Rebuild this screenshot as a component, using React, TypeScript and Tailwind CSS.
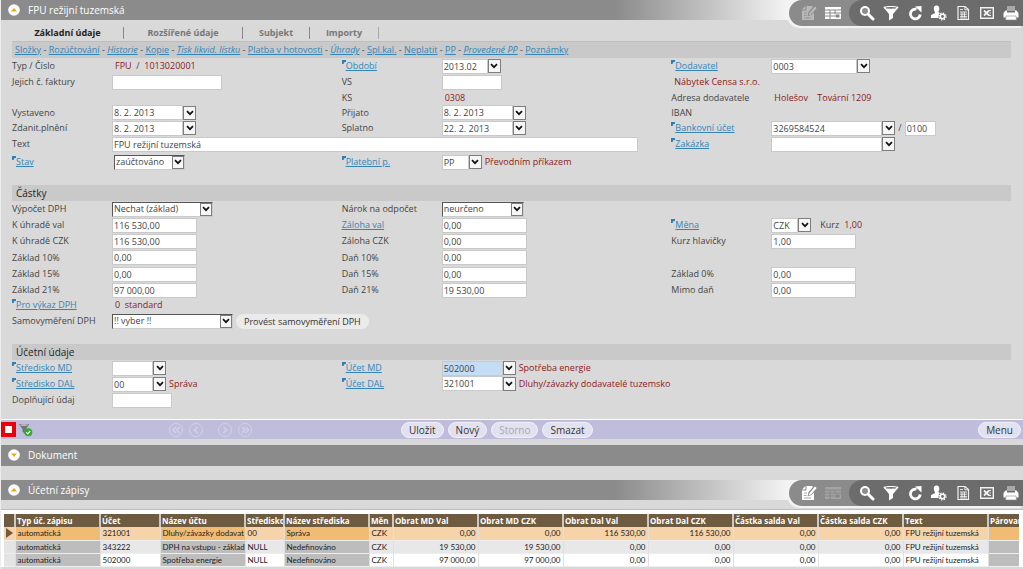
import type { ReactNode } from "react";

/* ---------- icons ---------- */

function EditIcon() {
  return (
    <svg viewBox="0 0 16 16" className="h-4 w-4" aria-hidden="true">
      <path d="M5.500 1H11l1 1-4.500 5L6.500 11.500 10.500 10 13 7.500V15H1V5.500h4.500z" fill="currentColor" />
      <path d="M1 4.500 4.500 1v3.500z" fill="currentColor" />
      <path d="M7.500 10.500 8.500 8 14 1.500 15.700 3 10 9.500z" fill="currentColor" />
      <path d="M3 8h3M3 10.500h2.500M3 13h7" stroke="#8b8b8b" strokeWidth=".8" />
    </svg>
  );
}

function GridIcon() {
  return (
    <svg viewBox="0 0 16 12" className="h-3 w-4" aria-hidden="true">
      <path d="M0 0h16v12H0z" fill="currentColor" />
      <path d="M0 3h16M0 6h16M0 9h10M5 3v9M10 3v4" stroke="#868686" strokeWidth="1" />
      <path d="M10.500 7.500h4v3h-4z" fill="#868686" />
    </svg>
  );
}

function SearchIcon() {
  return (
    <svg viewBox="0 0 16 16" className="h-4 w-4" fill="none" aria-hidden="true">
      <circle cx="6" cy="6" r="4" stroke="#fff" strokeWidth="2" fill="#8d8d8d" />
      <path d="m9.500 9.500 4.500 4.500" stroke="#fff" strokeWidth="3" strokeLinecap="round" />
    </svg>
  );
}

function FilterIcon() {
  return (
    <svg viewBox="0 0 16 16" className="h-4 w-4" fill="#fff" aria-hidden="true">
      <path d="M.5 2.500C.5 1.500 4 1 8 1s7.500.5 7.500 1.500L10 9v4l-4 2.500V9z" />
      <ellipse cx="8" cy="2.800" rx="5.500" ry=".9" fill="#6c6c6c" />
    </svg>
  );
}

function RefreshIcon() {
  return (
    <svg viewBox="0 0 16 16" className="h-4 w-4" fill="none" aria-hidden="true">
      <path d="M9.500 4.200A4.900 4.900 0 1 0 13.200 9.500" stroke="#fff" strokeWidth="2.800" />
      <path d="M8 1.500 14.500 1v6.500z" fill="#fff" />
    </svg>
  );
}

function UserGearIcon() {
  return (
    <svg viewBox="0 0 16 16" className="h-4 w-4" fill="none" aria-hidden="true">
      <path d="M5.500.5C7.500.5 8.500 2 8.300 4 8.100 5.500 7.500 6 7.500 7c0 .8 2.500 1 2.500 2.500V13H0v-2C0 9 4 9 4 7.500 4 6.500 3 6 2.800 4 2.600 2 3.500.5 5.500.5z" fill="#fff" />
      <circle cx="11.500" cy="11.500" r="4" fill="#6c6c6c" />
      <circle cx="11.500" cy="11.500" r="2.200" stroke="#fff" strokeWidth="1.500" />
      <circle cx="11.500" cy="11.500" r="3.400" stroke="#fff" strokeWidth="1.400" strokeDasharray="1.300 1.370" />
    </svg>
  );
}

function ReportIcon() {
  return (
    <svg viewBox="0 0 16 16" className="h-4 w-4" fill="none" stroke="#f2f2f2" aria-hidden="true">
      <path d="M3 1.500h7l3.500 3v10H3z" strokeWidth="1.200" />
      <path d="M9.800 1.500v3.300h3.500M5 4.500h3M5 7h7M5 9.200h7M5 11.400h7M7 7v5.500M9.500 7v5.500M5 13h7" strokeWidth=".9" />
    </svg>
  );
}

function ExcelIcon() {
  return (
    <svg viewBox="0 0 16 16" className="h-4 w-4" fill="none" stroke="#f2f2f2" aria-hidden="true">
      <path d="M1.700 2.700h12.600v10.600H1.700z" strokeWidth="1.400" />
      <path d="m5 5.500 5 5M10 5.500l-5 5" strokeWidth="1.800" />
      <path d="M10 5.500h2M10.500 8h1.500M10 10.500h2" strokeWidth="1" />
    </svg>
  );
}

function PrinterIcon() {
  return (
    <svg viewBox="0 0 16 16" className="h-4 w-4" aria-hidden="true">
      <path d="M4 1h8v5H4z" fill="#a9a9a9" />
      <path d="M2.500 5.500H4v2h8v-2h1.500L15.500 8v4.500h-15V8z" fill="#fff" />
      <path d="M3 11h10l.5 4h-11z" fill="#fff" stroke="#8a8a8a" strokeWidth=".6" />
    </svg>
  );
}

function Chevron() {
  return (
    <svg viewBox="0 0 8 6" className="h-[6px] w-2" fill="none" aria-hidden="true">
      <path d="M1 1.200 4 4.200 7 1.200" stroke="#111" strokeWidth="1.700" />
    </svg>
  );
}

function NavIcon({ d }: { d: string }) {
  return (
    <svg viewBox="0 0 16 16" className="h-4 w-4" fill="none" stroke="#d3d1e6" aria-hidden="true">
      <circle cx="8" cy="8" r="6.500" strokeWidth="1" />
      <path d={d} strokeWidth="1.500" />
    </svg>
  );
}

function FilterOkIcon() {
  return (
    <svg viewBox="0 0 14 14" className="h-[14px] w-[14px]" aria-hidden="true">
      <path d="M.5 1.500h9L6.500 6v5L4 8.500V6z" fill="#777" stroke="#555" strokeWidth=".6" />
      <ellipse cx="5" cy="2" rx="4" ry="1" fill="#b5b5b5" />
      <circle cx="9.300" cy="9.300" r="4" fill="#2fae2b" />
      <path d="m7.300 9.300 1.500 1.500 2.500-3" stroke="#fff" strokeWidth="1.200" fill="none" />
    </svg>
  );
}

/* ---------- section header ---------- */

function ToolButton({ label, children }: { label: string; children: ReactNode }) {
  return (
    <button type="button" aria-label={label} className="flex h-6 w-6 items-center justify-center">
      {children}
    </button>
  );
}

function Toolbar({ editing }: { editing: boolean }) {
  return (
    <div className="flex h-[26px] shrink-0 rounded-l-full bg-[#8b8b8b] pl-2 shadow-[-2px_2px_1px_#f4f4f4]">
      <div className={editing ? "flex w-[52px] items-center text-[#b9b9b9]" : "flex w-[52px] items-center text-white"}>
        <ToolButton label="Upravit"><EditIcon /></ToolButton>
        <span className={editing ? "text-white" : "text-[#a3a3a3]"}>
          <ToolButton label="Tabulka"><GridIcon /></ToolButton>
        </span>
      </div>
      <div className="flex items-center rounded-l-full bg-[#6c6c6c] pl-[6px]">
        <ToolButton label="Hledat"><SearchIcon /></ToolButton>
        <ToolButton label="Filtr"><FilterIcon /></ToolButton>
        <ToolButton label="Obnovit"><RefreshIcon /></ToolButton>
        <ToolButton label="Nastavení"><UserGearIcon /></ToolButton>
        <ToolButton label="Sestava"><ReportIcon /></ToolButton>
        <ToolButton label="Excel"><ExcelIcon /></ToolButton>
        <ToolButton label="Tisk"><PrinterIcon /></ToolButton>
      </div>
    </div>
  );
}

function SectionHeader({ title, open, tools }: { title: string; open: boolean; tools?: ReactNode }) {
  return (
    <header
      className={
        tools
          ? "flex h-5 items-start justify-between bg-linear-to-r from-[#8b8b8b] from-60% to-[#f4f4f4] to-77%"
          : "flex h-[21px] items-start bg-[#8b8b8b]"
      }
    >
      <div className="flex h-5 items-center gap-2 pl-[7px]">
        <button type="button" aria-label={title} aria-expanded={open} className="h-3 w-3">
          <svg viewBox="0 0 12 12" className="h-3 w-3" aria-hidden="true">
            <circle cx="6" cy="6" r="5.800" fill="#fff" />
            <path d={open ? "M2.800 7.500 6 4l3.200 3.500z" : "M3 4.500h6L6 8z"} fill="#f0a41c" />
          </svg>
        </button>
        <h2 className="text-[10px] leading-5 text-white">{title}</h2>
      </div>
      {tools}
    </header>
  );
}

/* ---------- form parts ---------- */

function Field({ label, id, link, flag, children, wide }: {
  label: string; id?: string; link?: boolean; flag?: boolean; children?: ReactNode; wide?: boolean;
}) {
  return (
    <div className={wide ? "col-span-2 flex items-center" : "flex items-center"}>
      <div className="flex w-[100px] shrink-0 items-center">
        {flag && (
          <svg viewBox="0 0 4 4" className="mb-2 h-1 w-1" aria-hidden="true">
            <path d="M0 0h4v2H2.500L1.500 4H0z" fill="#2f7fb5" />
          </svg>
        )}
        {link ? (
          <a href="#" className="text-[#3485b7] underline">{label}</a>
        ) : (
          <label htmlFor={id}>{label}</label>
        )}
      </div>
      {children}
    </div>
  );
}

const box = "h-[15px] border border-[#c9c9c9] bg-white px-px text-[#444] outline-none ";

function Box({ id, w, value = "", label }: { id: string; w: string; value?: string; label?: string }) {
  return <input id={id} aria-label={label} defaultValue={value} className={box + w} />;
}

function Combo({ id, w, value = "", label, active }: {
  id: string; w: string; value?: string; label: string; active?: boolean;
}) {
  return (
    <div className="flex items-center">
      <input
        id={id}
        aria-label={label}
        defaultValue={value}
        className={(active ? "h-[15px] border border-[#c9c9c9] bg-[#c5dcf5] px-px text-[#444] outline-none " : box) + w}
      />
      <button
        type="button"
        aria-label={label + " – výběr"}
        className="flex h-[14px] w-[13px] items-center justify-center border border-[#7d7d7d] bg-[#f6f6f6]"
      >
        <Chevron />
      </button>
    </div>
  );
}

function Pick({ id, w, value }: { id: string; w: string; value: string }) {
  return (
    <div className="relative">
      <select
        id={id}
        className={"block h-[15px] appearance-none border border-t-[#555] border-r-[#ccc] border-b-[#ccc] border-l-[#555] bg-white px-px leading-3 text-[#444] outline-none " + w}
      >
        <option>{value}</option>
      </select>
      <span className="pointer-events-none absolute top-px right-px flex h-[13px] w-3 items-center justify-center border border-[#7d7d7d] bg-[#f6f6f6]">
        <Chevron />
      </span>
    </div>
  );
}

function Value({ children }: { children: ReactNode }) {
  return <span className="pl-[3px] text-[#8b1a1a]">{children}</span>;
}

function Note({ children }: { children: ReactNode }) {
  return <span className="pl-[3px] text-[#8b1a1a]">{children}</span>;
}

function GroupTitle({ children }: { children: ReactNode }) {
  return <h3 className="h-4 bg-[#c9c9c9] pl-1 text-[10px] leading-4 text-[#222]">{children}</h3>;
}

const cols = "grid grid-cols-[33fr_33fr_34fr] ";

const links: [string, boolean][] = [
  ["Složky", false], ["Rozúčtování", false], ["Historie", true], ["Kopie", false],
  ["Tisk likvid. lístku", true], ["Platba v hotovosti", false], ["Úhrady", true], ["Spl.kal.", false],
  ["Neplatit", false], ["PP", false], ["Provedené PP", true], ["Poznámky", false],
];

/* ---------- entries table ---------- */

const heads = [
  "Typ úč. zápisu", "Účet", "Název účtu", "Středisko", "Název střediska", "Měn", "Obrat MD Val",
  "Obrat MD CZK", "Obrat Dal Val", "Obrat Dal CZK", "Částka salda Val", "Částka salda CZK", "Text", "Párovan",
];

const rows = [
  ["automatická", "321001", "Dluhy/závazky dodavat", "00", "Správa", "CZK", "0,00", "0,00", "116 530,00", "116 530,00", "0,00", "0,00", "FPU režijní tuzemská", ""],
  ["automatická", "343222", "DPH na vstupu - základ", "NULL", "Nedefinováno", "CZK", "19 530,00", "19 530,00", "0,00", "0,00", "0,00", "0,00", "FPU režijní tuzemská", ""],
  ["automatická", "502000", "Spotřeba energie", "NULL", "Nedefinováno", "CZK", "97 000,00", "97 000,00", "0,00", "0,00", "0,00", "0,00", "FPU režijní tuzemská", ""],
];

const shaded = [0, 2, 4, 13];
const rowBg = ["bg-[#f6d3a8]", "bg-[#e8e8e8]", "bg-white"];

function Entries() {
  return (
    <div className="overflow-hidden border-t border-[#bdbdbd] bg-white pt-1 pr-1 pl-[3px]">
      <table className="w-full table-fixed border-collapse font-[Lato,sans-serif] text-[8px] leading-3 text-[#222]">
        <colgroup>
          <col className="w-[11px]" />
          <col className="w-[85px]" />
          <col className="w-[60px]" />
          <col className="w-[85px]" />
          <col className="w-[39px]" />
          <col className="w-[85px]" />
          <col className="w-[24px]" />
          <col className="w-[85px]" />
          <col className="w-[85px]" />
          <col className="w-[85px]" />
          <col className="w-[85px]" />
          <col className="w-[85px]" />
          <col className="w-[85px]" />
          <col className="w-[85px]" />
          <col />
        </colgroup>
        <thead>
          <tr className="h-[13px] bg-[#6f5b3f] text-left text-white">
            <td className="p-0" />
            {heads.map((h) => (
              <th key={h} scope="col" className="overflow-hidden border-l-2 border-[#cfc8bd] p-0 pl-px font-[Open_Sans,sans-serif] font-bold whitespace-nowrap">{h}</th>
            ))}
          </tr>
        </thead>
        <tbody>
          {rows.map((r, i) => (
            <tr key={i} className={"h-[13px] border-b border-[#eeeeee] " + rowBg[i]}>
              <td className={i === 0 ? "p-0" : "bg-[#e4e4e4] p-0"}>
                {i === 0 && (
                  <svg viewBox="0 0 10 12" className="mx-auto h-3 w-[10px]" aria-hidden="true">
                    <path d="M2 1v10l7-5z" fill="#6f5b3f" />
                  </svg>
                )}
              </td>
              {r.map((c, j) => (
                <td
                  key={j}
                  className={
                    "overflow-hidden border-l border-[#e0e0e0] p-0 whitespace-nowrap " +
                    (j > 5 && j < 12 ? "pr-[2px] text-right " : "pl-[2px] ") +
                    (shaded.includes(j) ? (i === 0 ? "bg-[#f0bb72]" : "bg-[#bdbdbd]") : "")
                  }
                >
                  {c}
                </td>
              ))}
            </tr>
          ))}
        </tbody>
      </table>
    </div>
  );
}

function Action({ children, disabled }: { children: ReactNode; disabled?: boolean }) {
  return (
    <button
      type="button"
      disabled={disabled}
      className="h-4 rounded-full border border-[#f2f1fa] bg-[#e2e1ef] px-[7px] text-[10px] leading-[14px] text-[#333] disabled:text-[#a9a9b5]"
    >
      {children}
    </button>
  );
}

export default function App() {
  return (
    <div className="min-h-screen overflow-hidden border-l border-[#ececec] bg-[#d9d9d9] font-[Open_Sans,sans-serif] text-[9px] leading-[14px] text-[#444]">
      <SectionHeader title="FPU režijní tuzemská" open tools={<Toolbar editing />} />

      <main className="pr-3 pl-[11px]">
        <nav className="flex h-[22px] items-end border-b border-[#bdbdbd] text-[#777]">
          <button type="button" className="mb-[2px] h-3 w-[112px] border-r border-[#888] leading-3 font-bold text-[#222]">Základní údaje</button>
          <button type="button" className="mb-[2px] h-3 w-[119px] border-r border-[#888] leading-3 font-bold">Rozšířené údaje</button>
          <button type="button" className="mb-[2px] h-3 w-[67px] border-r border-[#888] leading-3 font-bold">Subjekt</button>
          <button type="button" className="mb-[2px] h-3 w-[69px] border-r border-[#aaa] leading-3 font-bold">Importy</button>
        </nav>
        <div className="h-4 bg-[#c9c9c9] pl-[3px] leading-4 whitespace-nowrap">
          {links.map(([t, it], i) => (
            <span key={t}>
              {i > 0 && " - "}
              <a href="#" className={it ? "text-[#3485b7] italic underline" : "text-[#3485b7] underline"}>{t}</a>
            </span>
          ))}
        </div>

        <section className={cols + "grid-rows-[16px_16px_15px_15px_16px_16px_20px]"}>
          <Field label="Typ / Číslo"><Value>FPU&nbsp; <span className="text-[#444]">/</span>&nbsp; 1013020001</Value></Field>
          <Field label="Období" link flag><Combo id="obd" label="Období" w="w-[46px]" value="2013.02" /></Field>
          <Field label="Dodavatel" link flag><Combo id="dod" label="Dodavatel" w="w-[86px]" value="0003" /></Field>

          <Field label="Jejich č. faktury" id="jcf"><Box id="jcf" w="w-[110px]" /></Field>
          <Field label="VS" id="vs"><Box id="vs" w="w-[60px]" /></Field>
          <div className="flex items-center"><Value>Nábytek Censa s.r.o.</Value></div>

          <div />
          <Field label="KS"><Value>0308</Value></Field>
          <Field label="Adresa dodavatele"><Value>Holešov&nbsp;&nbsp;&nbsp; Tovární 1209</Value></Field>

          <Field label="Vystaveno" id="vys"><Combo id="vys" label="Vystaveno" w="w-[71px]" value="8. 2. 2013" /></Field>
          <Field label="Přijato" id="pri"><Combo id="pri" label="Přijato" w="w-[71px]" value="8. 2. 2013" /></Field>
          <Field label="IBAN" />

          <Field label="Zdanit.plnění" id="zda"><Combo id="zda" label="Zdanit.plnění" w="w-[71px]" value="8. 2. 2013" /></Field>
          <Field label="Splatno" id="spl"><Combo id="spl" label="Splatno" w="w-[71px]" value="22. 2. 2013" /></Field>
          <Field label="Bankovní účet" link flag>
            <Combo id="buc" label="Bankovní účet" w="w-[111px]" value="3269584524" />
            <span className="px-[3px]">/</span>
            <Box id="kod" label="Kód banky" w="w-[31px]" value="0100" />
          </Field>

          <Field label="Text" id="txt" wide><Box id="txt" w="w-[526px]" value="FPU režijní tuzemská" /></Field>
          <Field label="Zakázka" link flag><Combo id="zak" label="Zakázka" w="w-[111px]" /></Field>

          <Field label="Stav" link flag><div className="pl-[2px]"><Pick id="sta" w="w-[71px]" value="zaúčtováno" /></div></Field>
          <Field label="Platební p." link flag>
            <Combo id="pla" label="Platební p." w="w-[27px]" value="PP" />
            <Note>Převodním příkazem</Note>
          </Field>
        </section>

        <div className="pt-[13px]"><GroupTitle>Částky</GroupTitle></div>
        <section className={cols + "grid-rows-[16px_16px_16px_17px_16px_16px_14px_18px]"}>
          <Field label="Výpočet DPH" id="vyp"><Pick id="vyp" w="w-[101px]" value="Nechat (základ)" /></Field>
          <Field label="Nárok na odpočet" id="nar"><Pick id="nar" w="w-[82px]" value="neurčeno" /></Field>
          <div />

          <Field label="K úhradě val" id="kuv"><Box id="kuv" w="w-[85px]" value="116 530,00" /></Field>
          <Field label="Záloha val" link><Box id="zav" label="Záloha val" w="w-[85px]" value="0,00" /></Field>
          <Field label="Měna" link flag>
            <Combo id="men" label="Měna" w="w-[27px]" value="CZK" />
            <span className="pl-[9px]">Kurz</span>
            <span className="pl-[5px] text-[#8b1a1a]">1,00</span>
          </Field>

          <Field label="K úhradě CZK" id="kuc"><Box id="kuc" w="w-[85px]" value="116 530,00" /></Field>
          <Field label="Záloha CZK" id="zac"><Box id="zac" w="w-[85px]" value="0,00" /></Field>
          <Field label="Kurz hlavičky" id="kur"><Box id="kur" w="w-[85px]" value="1,00" /></Field>

          <Field label="Základ 10%" id="z10"><Box id="z10" w="w-[85px]" value="0,00" /></Field>
          <Field label="Daň 10%" id="d10"><Box id="d10" w="w-[85px]" value="0,00" /></Field>
          <div />

          <Field label="Základ 15%" id="z15"><Box id="z15" w="w-[85px]" value="0,00" /></Field>
          <Field label="Daň 15%" id="d15"><Box id="d15" w="w-[85px]" value="0,00" /></Field>
          <Field label="Základ 0%" id="z0"><Box id="z0" w="w-[85px]" value="0,00" /></Field>

          <Field label="Základ 21%" id="z21"><Box id="z21" w="w-[85px]" value="97 000,00" /></Field>
          <Field label="Daň 21%" id="d21"><Box id="d21" w="w-[85px]" value="19 530,00" /></Field>
          <Field label="Mimo daň" id="mim"><Box id="mim" w="w-[85px]" value="0,00" /></Field>

          <Field label="Pro výkaz DPH" link flag><Value>0&nbsp; standard</Value></Field>
          <div />
          <div />

          <Field label="Samovyměření DPH" id="sam" wide>
            <Pick id="sam" w="w-[121px]" value="!! vyber !!" />
            <button type="button" className="ml-[3px] h-[15px] rounded-full bg-[#ebebeb] px-2 leading-[15px] text-[#333]">
              Provést samovyměření DPH
            </button>
          </Field>
        </section>

        <div className="pt-[14px]"><GroupTitle>Účetní údaje</GroupTitle></div>
        <section className={cols + "grid-rows-[16px_16px_16px] pb-[11px]"}>
          <Field label="Středisko MD" link flag><Combo id="smd" label="Středisko MD" w="w-[41px]" /></Field>
          <Field label="Účet MD" link flag>
            <Combo id="umd" label="Účet MD" w="w-[61px]" value="502000" active />
            <Note>Spotřeba energie</Note>
          </Field>
          <div />
          <Field label="Středisko DAL" link flag>
            <Combo id="sda" label="Středisko DAL" w="w-[41px]" value="00" />
            <Note>Správa</Note>
          </Field>
          <div className="col-span-2">
            <Field label="Účet DAL" link flag>
              <Combo id="uda" label="Účet DAL" w="w-[61px]" value="321001" />
              <Note>Dluhy/závazky dodavatelé tuzemsko</Note>
            </Field>
          </div>
          <Field label="Doplňující údaj" id="dop"><Box id="dop" w="w-[60px]" /></Field>
        </section>
      </main>

      <div className="mb-[6px] grid h-5 grid-cols-[400px_1fr_auto] items-center border-t border-white bg-[#bfbddb] pr-[2px]">
        <div className="flex items-center">
          <button type="button" aria-label="Stop" className="h-[15px] w-[15px] border-4 border-[#e8000b] bg-white" />
          <span className="pl-[3px]"><FilterOkIcon /></span>
          <div className="flex items-center pl-[135px]">
            <button type="button" aria-label="První"><NavIcon d="M8 5 5 8l3 3M11.500 5l-3 3 3 3" /></button>
            <button type="button" aria-label="Předchozí" className="ml-1"><NavIcon d="M9.500 5l-3 3 3 3" /></button>
            <button type="button" aria-label="Další" className="ml-[13px]"><NavIcon d="M6.500 5l3 3-3 3" /></button>
            <button type="button" aria-label="Poslední" className="ml-1"><NavIcon d="M5 5l3 3-3 3M8.500 5l3 3-3 3" /></button>
          </div>
        </div>
        <div className="flex gap-1">
          <Action>Uložit</Action>
          <Action>Nový</Action>
          <Action disabled>Storno</Action>
          <Action>Smazat</Action>
        </div>
        <Action>Menu</Action>
      </div>

      <SectionHeader title="Dokument" open={false} />
      <div className="h-[14px]" />
      <SectionHeader title="Účetní zápisy" open tools={<Toolbar editing={false} />} />
      <div className="h-[9px]" />
      <Entries />
    </div>
  );
}
